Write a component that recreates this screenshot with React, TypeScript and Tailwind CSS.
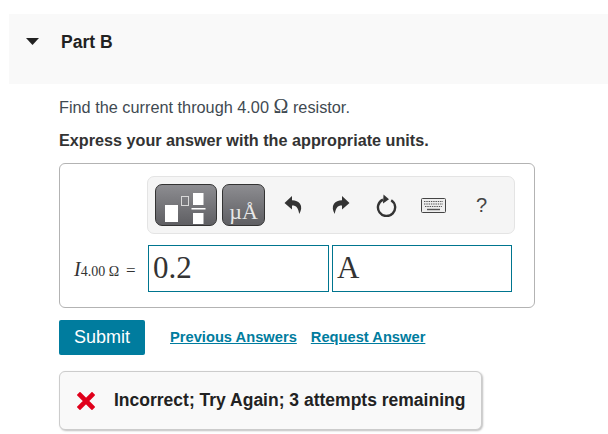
const sans = "font-['Liberation_Sans',Arial,sans-serif]";
const serif = "font-['Liberation_Serif','Times_New_Roman',serif]";

function TemplatesIcon() {
  return (
    <svg width="46" height="34" viewBox="0 0 46 34" fill="none">
      <rect x="2" y="15" width="13" height="17" fill="#fff" />
      <rect x="18.5" y="6.5" width="7" height="9" fill="none" stroke="#d8d8d8" strokeWidth="1" />
      <rect x="30" y="3" width="10.5" height="12" fill="#fff" />
      <rect x="28.5" y="18" width="14" height="1.5" fill="#fff" />
      <rect x="30" y="23" width="10.5" height="11" fill="#fff" />
    </svg>
  );
}

function UndoIcon({ flip }: { flip?: boolean }) {
  return (
    <svg width="18" height="20" viewBox="0 0 18 20" className={flip ? "-scale-x-100" : ""}>
      <path d="M8 1 L0.5 8 L8 14.5 V10.4 C12 10.2 14.4 12.5 15.2 19 C17.4 15.5 18 11.8 16 8.8 C14.5 6.4 11.5 5.2 8 5.2 Z" fill="#333" />
    </svg>
  );
}

function RedoIcon() {
  return (
    <svg width="21" height="23" viewBox="0 0 21 23" fill="none">
      <path d="M7 5.6 A8.6 8.6 0 1 0 15.2 6.2" stroke="#333" strokeWidth="2.4" />
      <path d="M7.5 0.5 L13 5.2 L7 9.5 Z" fill="#333" />
    </svg>
  );
}

function KeyboardIcon() {
  return (
    <svg width="25" height="15" viewBox="0 0 25 15">
      <rect x="0.5" y="0.5" width="24" height="14" rx="1" fill="#eee" stroke="#444" />
      <path d="M3 3.5 H22 M3 6 H22 M4 8.5 H21" stroke="#555" strokeWidth="1.2" strokeDasharray="1.4 0.9" />
      <path d="M6 11.5 H19" stroke="#555" strokeWidth="1.4" />
    </svg>
  );
}

export default function App() {
  return (
    <div className={`${sans} h-[434px] w-[608px] overflow-hidden bg-white pt-[14px]`}>
      <div className="ml-[9px] flex h-[70px] items-start bg-[#f9f9f9] pl-[17px] pt-[18px]">
        <svg width="13" height="7" viewBox="0 0 13 7" className="mt-[6px]">
          <path d="M0 0 H13 L6.5 7 Z" fill="#222" />
        </svg>
        <h2 className="ml-[22px] text-[17.5px] leading-[20px] font-bold text-[#222]">Part B</h2>
      </div>

      <div className="pl-[59px]">
        <p className="mt-[13px] flex h-[18px] items-baseline text-[16.3px] leading-[18px] text-[#3f4a52]">
          <span>Find the current through 4.00&nbsp;</span>
          <span className={`${serif} text-[20px] text-[#3f4a52]`}>Ω</span>
          <span>&nbsp;resistor.</span>
        </p>
        <p className="mt-[16px] text-[16.2px] leading-[18px] font-bold text-[#333]">
          Express your answer with the appropriate units.
        </p>

        <div className="mt-[14px] flex h-[145px] w-[476px] flex-col rounded-[6px] border border-[#b3b3b3] pt-[12px]">
          <div className="ml-[87px] flex h-[58px] w-[368px] items-center rounded-[7px] border border-[#e4e4e4] bg-[#f5f5f5] pl-[7px]">
            <div className="flex h-[42px] w-[62px] items-end justify-center rounded-[7px] border border-[#333] bg-gradient-to-b from-[#8d8d91] to-[#5f5f63] pb-[1px]">
              <TemplatesIcon />
            </div>
            <div className={`${serif} ml-[5px] flex h-[42px] w-[43px] items-end justify-center rounded-[7px] border border-[#333] bg-gradient-to-b from-[#8d8d91] to-[#5f5f63] pb-[1px] text-[22px] leading-[24px] text-[#e8e8e8]`}>
              µÅ
            </div>
            <div className="ml-[19px]"><UndoIcon /></div>
            <div className="ml-[30px]"><UndoIcon flip /></div>
            <div className="ml-[26px]"><RedoIcon /></div>
            <div className="ml-[24px]"><KeyboardIcon /></div>
            <span className="ml-[30px] text-[20px] text-[#444]">?</span>
          </div>

          <div className="mt-[11px] flex items-center">
            <div className={`${serif} ml-[14px] flex w-[74px] items-baseline whitespace-nowrap text-[#333]`}>
              <i className="text-[20px]">I</i>
              <span className="text-[14px]">4.00 Ω</span>
              <span className="ml-[7px] text-[17px]">=</span>
            </div>
            <div className={`${serif} flex h-[47px] w-[181px] items-center border border-[#00758f] pl-[4px] text-[31px] text-[#333]`}>0.2</div>
            <div className={`${serif} ml-[3px] flex h-[47px] w-[180px] items-center border border-[#00758f] pl-[4px] text-[31px] text-[#333]`}>A</div>
          </div>
        </div>

        <div className="mt-[12px] flex items-center">
          <button className="h-[35px] w-[86px] rounded-[2px] bg-[#007c9e] text-[18px] text-white">Submit</button>
          <a className="ml-[25px] text-[14.7px] font-bold text-[#007c9e] underline">Previous Answers</a>
          <a className="ml-[14px] text-[14.7px] font-bold text-[#007c9e] underline">Request Answer</a>
        </div>

        <div className="mt-[16px] flex h-[59px] w-[423px] items-center rounded-[6px] border border-[#ccc] bg-[#f9f9f9] pl-[17px] shadow-[1px_1px_2px_rgba(0,0,0,0.25)]">
          <svg width="18" height="18" viewBox="0 0 18 18">
            <path d="M3 3 L15 15 M15 3 L3 15" stroke="#e0001b" strokeWidth="4.6" strokeLinecap="square" />
          </svg>
          <span className="ml-[19px] text-[17.5px] font-bold text-[#222]">Incorrect; Try Again; 3 attempts remaining</span>
        </div>
      </div>
    </div>
  );
}
